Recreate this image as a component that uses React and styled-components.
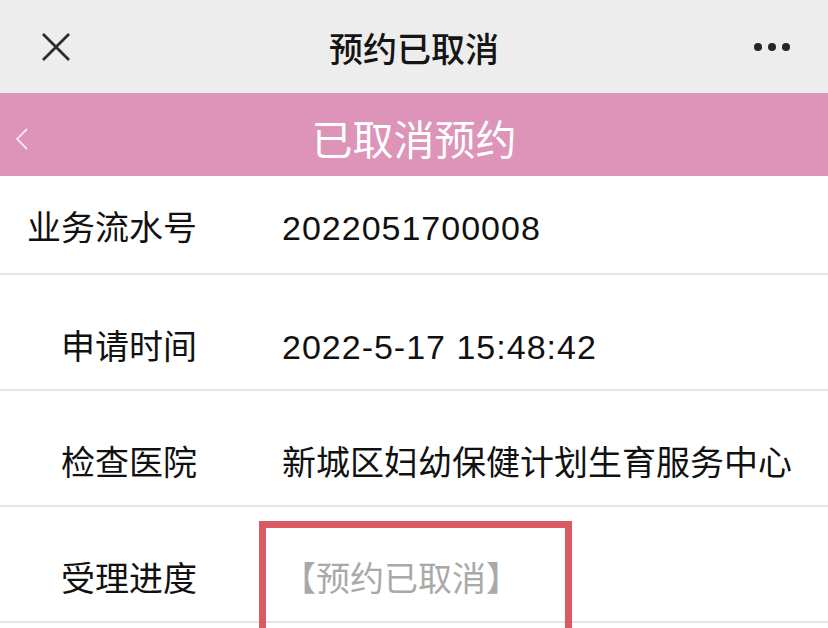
import React from "react";
import styled, { createGlobalStyle } from "styled-components";

const GlobalStyle = createGlobalStyle`
  html, body {
    margin: 0;
    padding: 0;
    background: #ffffff;
    overflow: hidden;
  }
  body {
    font-family: "Liberation Sans", "Noto Sans CJK SC", sans-serif;
  }
`;

const Page = styled.div`
  width: 828px;
  height: 628px;
  overflow: hidden;
  background: #fff;
`;

const NavBar = styled.div`
  height: 93px;
  background: #ededed;
  display: grid;
  grid-template-columns: 110px 1fr 110px;
  align-items: center;
`;

const NavTitle = styled.div`
  text-align: center;
  font-size: 34px;
  font-weight: 500;
  color: #151515;
  font-family: "Noto Sans CJK SC", sans-serif;
  padding-top: 2px;
`;

const NavIcon = styled.div`
  display: flex;
  align-items: center;
  justify-content: ${({ $end }) => ($end ? "flex-end" : "flex-start")};
  padding: ${({ $end }) => ($end ? "0 37px 0 0" : "0 0 0 41px")};
  height: 100%;
`;

const HeaderBar = styled.div`
  height: 83px;
  background: #dd94b8;
  display: grid;
  grid-template-columns: 110px 1fr 110px;
  align-items: center;
`;

const HeaderTitle = styled.div`
  text-align: center;
  font-size: 41px;
  color: #ffffff;
  font-family: "Noto Sans CJK SC", sans-serif;
  padding-top: 4px;
`;

const Back = styled.div`
  padding-left: 14px;
  display: flex;
  align-items: center;
  padding-top: 8px;
`;

const List = styled.div`
  display: flex;
  flex-direction: column;
`;

const Row = styled.div`
  position: relative;
  display: grid;
  grid-template-columns: 197px 1fr;
  column-gap: 85px;
  align-items: center;
  padding: 52px 0 22px;
  border-bottom: 2px solid #e4e4e4;
  &:first-child {
    padding-top: 32px;
    padding-bottom: 25px;
  }
  &:last-child {
    padding-top: 52px;
  }
`;

const Label = styled.div`
  text-align: right;
  font-size: 34px;
  line-height: 40px;
  color: #111;
`;

const Value = styled.div`
  font-size: 34px;
  line-height: 40px;
  letter-spacing: ${({ $num }) => ($num ? "1px" : "0")};
  color: ${({ $muted }) => ($muted ? "#a9a9a9" : "#111")};
  white-space: nowrap;
`;

const Highlight = styled.div`
  position: absolute;
  left: 259px;
  top: 14px;
  width: 313px;
  height: 130px;
  box-sizing: border-box;
  border: 7px solid #da5a61;
  pointer-events: none;
`;

const CloseIcon = () => (
  <svg width="30" height="30" viewBox="0 0 30 30">
    <path d="M2 2 L28 28 M28 2 L2 28" stroke="#2c2c2c" strokeWidth="2.8" fill="none" />
  </svg>
);

const MoreIcon = () => (
  <svg width="38" height="10" viewBox="0 0 38 10">
    <circle cx="5" cy="5" r="4" fill="#262626" />
    <circle cx="19" cy="5" r="4" fill="#262626" />
    <circle cx="33" cy="5" r="4" fill="#262626" />
  </svg>
);

const BackIcon = () => (
  <svg width="16" height="24" viewBox="0 0 16 24">
    <polyline points="13,2 3,12 13,22" stroke="#f6e6ef" strokeWidth="1.8" fill="none" />
  </svg>
);

const rows = [
  { label: "业务流水号", value: "2022051700008", num: true },
  { label: "申请时间", value: "2022-5-17 15:48:42", num: true },
  { label: "检查医院", value: "新城区妇幼保健计划生育服务中心" },
  { label: "受理进度", value: "【预约已取消】", muted: true, mark: true },
];

export default function App() {
  return (
    <Page>
      <GlobalStyle />
      <NavBar>
        <NavIcon>
          <CloseIcon />
        </NavIcon>
        <NavTitle>预约已取消</NavTitle>
        <NavIcon $end>
          <MoreIcon />
        </NavIcon>
      </NavBar>
      <HeaderBar>
        <Back>
          <BackIcon />
        </Back>
        <HeaderTitle>已取消预约</HeaderTitle>
        <div />
      </HeaderBar>
      <List>
        {rows.map((r) => (
          <Row key={r.label}>
            <Label>{r.label}</Label>
            <Value $num={r.num} $muted={r.muted}>
              {r.value}
            </Value>
            {r.mark && <Highlight />}
          </Row>
        ))}
      </List>
    </Page>
  );
}
